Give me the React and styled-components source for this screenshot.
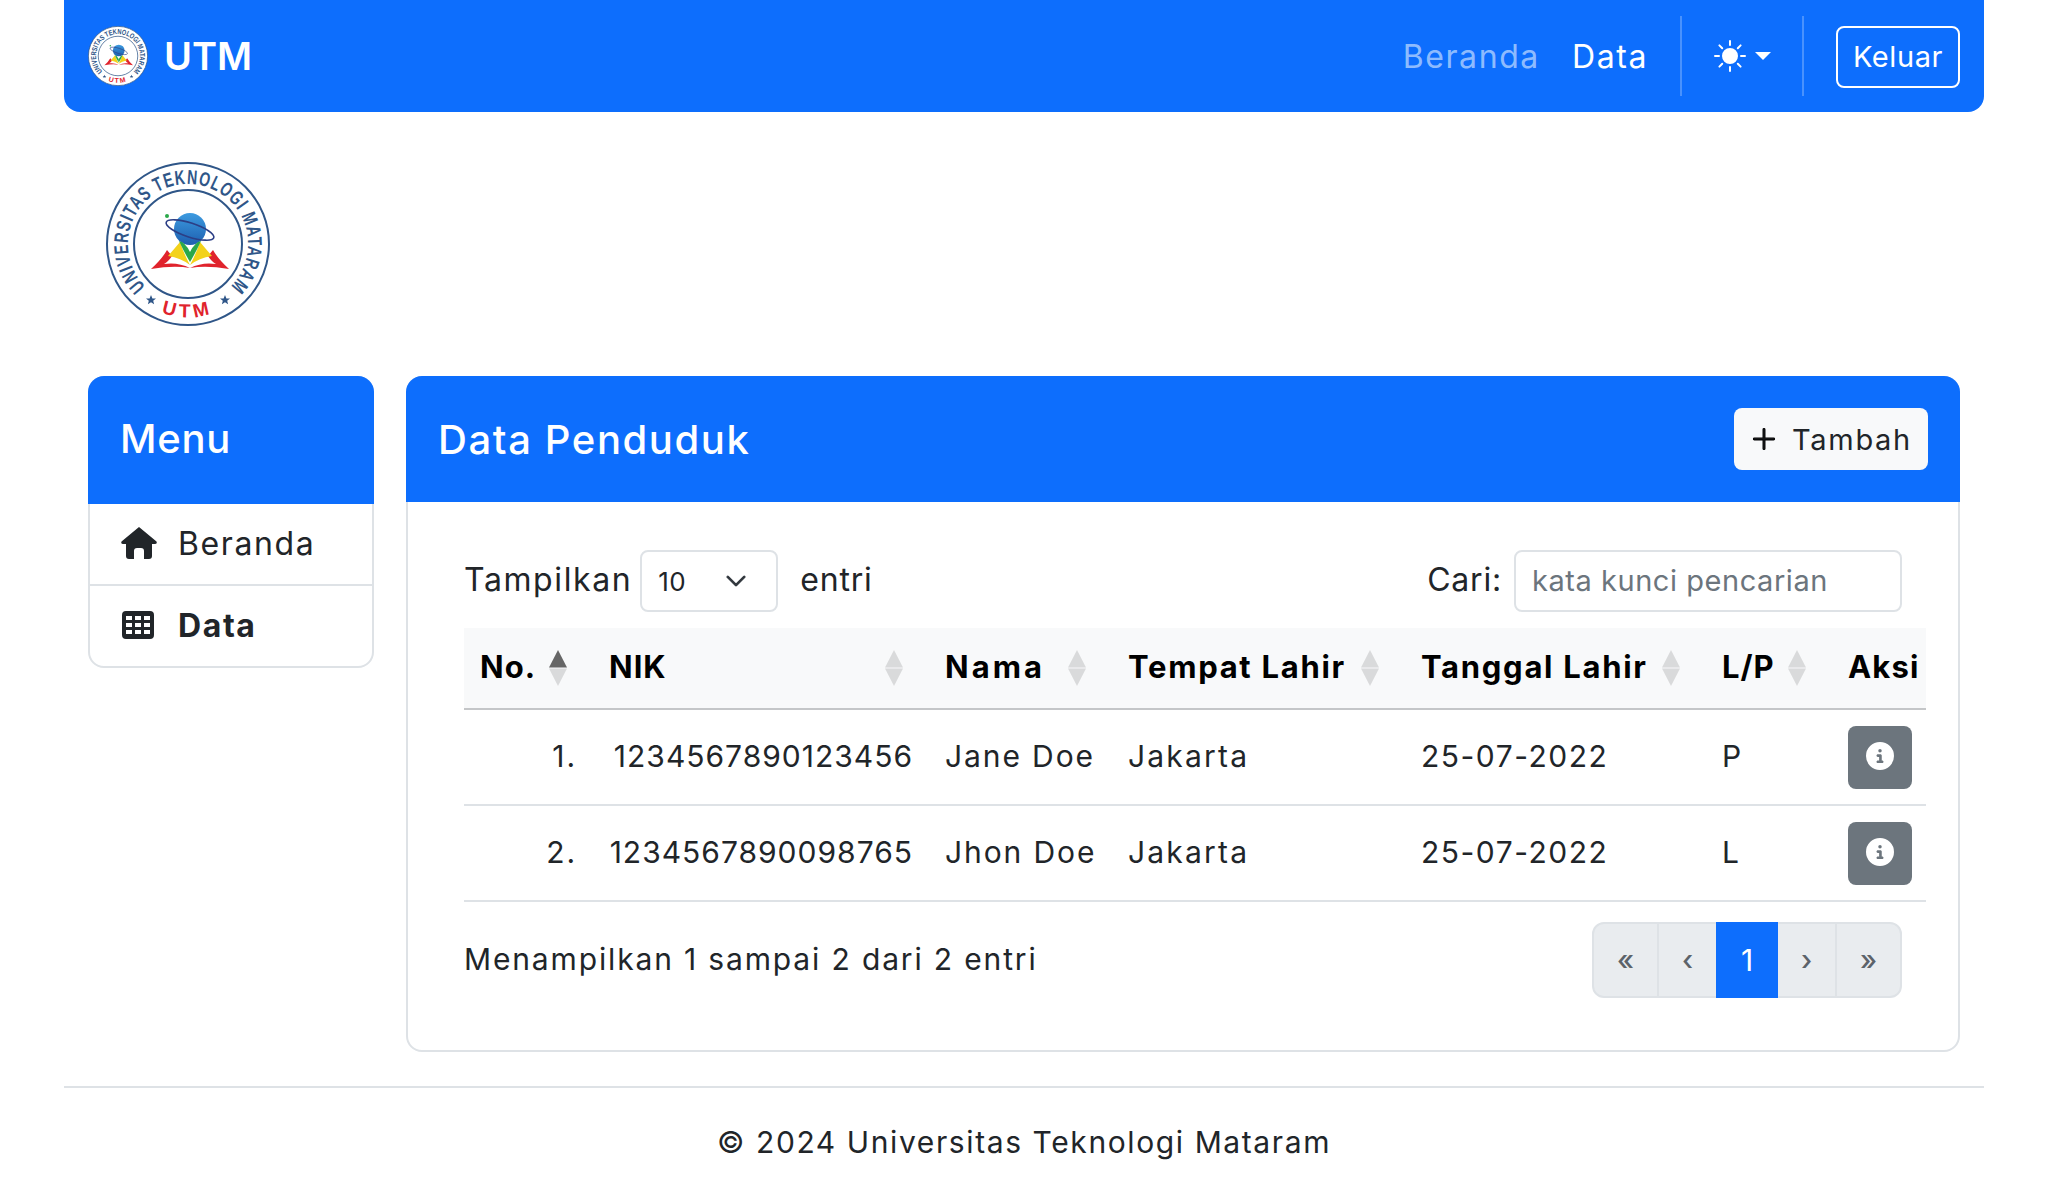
import styled, { createGlobalStyle } from "styled-components"
import { BsSunFill, BsPlusLg, BsChevronDown } from "react-icons/bs"
import { FaCircleInfo } from "react-icons/fa6"

const Global = createGlobalStyle`
    * { box-sizing : border-box; }
    body {
        margin : 0;
        background : #fff;
        color : #212529;
        font-family : "Inter", "Noto Sans", sans-serif;
        font-size : 30px;
        letter-spacing : 1.5px;
    }
`;

const Page = styled.div`
    width : 1920px;
    height : 1200px;
    margin : 0 auto;
    overflow : hidden;
`;

/* navbar */
const Navbar = styled.nav`
    height : 112px;
    background : #0d6efd;
    border-radius : 0 0 16px 16px;
    padding : 0 24px;
    display : flex;
    align-items : center;
    color : #fff;
`;

const Brand = styled.div`
    display : flex;
    align-items : center;
    gap : 16px;
    font-size : 38px;
    font-weight : 600;
    letter-spacing : 0;
    flex : 1;
`;

const NavLink = styled.a`
    font-size : 32px;
    letter-spacing : 1.6px;
    margin-right : 32px;
    color : ${p => (p.$muted ? "rgba(255,255,255,0.55)" : "#fff")};
`;

const NavDivider = styled.div`
    width : 2px;
    height : 80px;
    background : rgba(255,255,255,0.25);
`;

const ThemeToggle = styled.div`
    width : 120px;
    display : flex;
    align-items : center;
    justify-content : center;
    gap : 9px;
`;

const Caret = styled.span`
    width : 0;
    height : 0;
    border-top : 8px solid #fff;
    border-left : 8px solid transparent;
    border-right : 8px solid transparent;
`;

const LogoutButton = styled.button`
    margin : 2px 0 0 32px;
    width : 124px;
    height : 62px;
    border : 2px solid #fff;
    border-radius : 8px;
    background : transparent;
    color : #fff;
    font : inherit;
    font-size : 29px;
    letter-spacing : 0.6px;
    padding : 0 0 2px;
`;

/* logo */
const LogoRow = styled.div`
    padding : 50px 0 0 42px;
    height : 264px;
`;

/* columns */
const Columns = styled.div`
    display : grid;
    grid-template-columns : 286px 1554px;
    gap : 32px;
    padding : 0 24px;
    align-items : start;
`;

const Sidebar = styled.aside`
    border : 2px solid #dee2e6;
    border-radius : 16px;
`;

const SideHead = styled.div`
    margin : -2px -2px 0;
    height : 128px;
    background : #0d6efd;
    border-radius : 16px 16px 0 0;
    color : #fff;
    font-size : 40px;
    font-weight : 500;
    letter-spacing : 0.7px;
    padding : 0 32px 4px;
    display : flex;
    align-items : center;
`;

const SideItem = styled.div`
    height : ${p => (p.$last ? "82px" : "80px")};
    padding : 0 30px 2px;
    display : flex;
    align-items : center;
    gap : 20px;
    font-size : 32px;
    letter-spacing : 1.6px;
    font-weight : ${p => (p.$active ? 700 : 400)};
    border-top : ${p => (p.$last ? "2px solid #dee2e6" : "none")};
    svg { width : 38px; height : 32px; flex : none; fill : #212529; }
`;

const Card = styled.section`
    height : 676px;
    border : 2px solid #dee2e6;
    border-radius : 16px;
`;

const CardHead = styled.div`
    margin : -2px -2px 0;
    height : 126px;
    background : #0d6efd;
    border-radius : 16px 16px 0 0;
    color : #fff;
    padding : 0 32px;
    display : flex;
    align-items : center;
    justify-content : space-between;
`;

const CardTitle = styled.h2`
    margin : 0;
    font-size : 40px;
    font-weight : 500;
    letter-spacing : 1.6px;
`;

const AddButton = styled.button`
    width : 194px;
    height : 62px;
    border : none;
    border-radius : 8px;
    background : #f8f9fa;
    color : #212529;
    font : inherit;
    font-size : 29px;
    letter-spacing : 1.7px;
    display : flex;
    align-items : center;
    gap : 14px;
    padding : 0 0 0 16px;
    svg { width : 28px; height : 28px; stroke : #000; stroke-width : 0.7; }
`;

const CardBody = styled.div`
    padding : 48px 56px 0;
`;

const Toolbar = styled.div`
    display : flex;
    align-items : center;
    justify-content : space-between;
    height : 62px;
    font-size : 32px;
`;

const ToolGroup = styled.label`
    display : flex;
    align-items : center;
    gap : ${p => p.$gap || 8}px;
`;

const ToolText = styled.span`
    padding-bottom : 3px;
    margin-left : ${p => p.$ml || 0}px;
    letter-spacing : ${p => p.$ls || 1.6}px;
`;

const FakeSelect = styled.div`
    width : 138px;
    height : 62px;
    border : 2px solid #dee2e6;
    border-radius : 8px;
    padding : 0 29px 0 16px;
    display : flex;
    align-items : center;
    justify-content : space-between;
    font-size : 26px;
    letter-spacing : 0.5px;
    svg { width : 22px; height : 22px; stroke : #343a40; stroke-width : 1; }
`;

const SearchInput = styled.input`
    width : 388px;
    height : 62px;
    border : 2px solid #dee2e6;
    border-radius : 8px;
    padding : 0 16px 2px;
    font : inherit;
    font-size : 29px;
    letter-spacing : 0.55px;
    color : #212529;
    &::placeholder { color : #6c757d; opacity : 1; }
`;

const TableEl = styled.table`
    width : 1462px;
    margin-top : 16px;
    border-collapse : collapse;
    table-layout : fixed;
`;

const Th = styled.th`
    width : ${p => p.$w}px;
    height : 81px;
    padding : 0 16px;
    background : #f8f9fa;
    border-bottom : 2px solid #c4c6c8;
    color : #000;
    font-weight : 700;
    font-size : 31px;
    text-align : left;
    white-space : nowrap;
`;

const ThInner = styled.div`
    display : flex;
    align-items : center;
    justify-content : space-between;
    padding-right : 10px;
`;

const ThText = styled.span`
    padding-bottom : 3px;
    letter-spacing : ${p => p.$ls || 1.7}px;
`;

const Td = styled.td`
    height : 96px;
    padding : 0 16px 2px;
    border-bottom : 2px solid #dee2e6;
    text-align : ${p => (p.$right ? "right" : "left")};
    letter-spacing : ${p => p.$ls || 1.9}px;
    white-space : nowrap;
`;

const InfoButton = styled.button`
    display : flex;
    align-items : center;
    justify-content : center;
    width : 64px;
    height : 63px;
    margin-top : 2px;
    border : none;
    border-radius : 8px;
    background : #6c757d;
    color : #fff;
    padding : 0;
    svg { width : 28px; height : 28px; margin-top : -2px; }
`;

const TableFoot = styled.div`
    display : flex;
    align-items : center;
    justify-content : space-between;
    margin-top : 20px;
    letter-spacing : 1.85px;
`;

const FootText = styled.span`
    padding-bottom : 3px;
`;

const Pager = styled.div`
    width : 310px;
    height : 76px;
    border : 2px solid #dee2e6;
    border-radius : 12px;
    background : #e9ecef;
    display : flex;
`;

const PageItem = styled.div`
    width : ${p => p.$w}px;
    margin : ${p => (p.$active ? "-2px 0" : "0")};
    display : flex;
    align-items : center;
    justify-content : center;
    color : ${p => (p.$active ? "#fff" : "#5c636a")};
    background : ${p => (p.$active ? "#0d6efd" : "transparent")};
    font-size : ${p => (p.$active ? "30px" : "28px")};
    font-weight : ${p => (p.$active ? 400 : 500)};
    letter-spacing : 0;
    border-right : ${p => (p.$line ? "2px solid #dee2e6" : "none")};
`;

const Footer = styled.footer`
    margin-top : 34px;
    border-top : 2px solid #dee2e6;
    text-align : center;
    padding-top : 36px;
    letter-spacing : 1.6px;
`;

const SortIcon = ({ active }) => (
    <svg width="18" height="36" viewBox="0 0 18 36" style={{ flex: "none" }}>
        <path d="M9 0 L18 17.5 H0 Z" fill={active ? "#666" : "#d9dadb"} />
        <path d="M9 36 L18 18.5 H0 Z" fill="#d9dadb" />
    </svg>
);

const HouseIcon = () => (
    <svg viewBox="0 0 38 32">
        <path d="M19 0 L36.5 14.5 Q37.5 16.5 35 17 H32 V29 Q32 32 29 32 H24 V24 Q24 21 21 21 H17 Q14 21 14 24 V32 H9 Q6 32 6 29 V17 H3 Q0.5 16.5 1.5 14.5 Z" />
    </svg>
);

const GridIcon = () => (
    <svg viewBox="0 0 38 32">
        <path
            fillRule="evenodd"
            d="M6 2 H30 Q34 2 34 6 V26 Q34 30 30 30 H6 Q2 30 2 26 V6 Q2 2 6 2 Z
               M6 7 V11 H12 V7 Z M15 7 V11 H21 V7 Z M24 7 V11 H30 V7 Z
               M6 14 V18 H12 V14 Z M15 14 V18 H21 V14 Z M24 14 V18 H30 V14 Z
               M6 21 V25 H12 V21 Z M15 21 V25 H21 V21 Z M24 21 V25 H30 V21 Z"
        />
    </svg>
);

const BookWing = ({ transform }) => (
    <g transform={transform}>
        <path d="M45 107 Q56 97 61 88 L66 94 Q62 100 58 102 Q72 100 84 106 Q68 103 45 107Z" fill="#e0232c" />
        <path d="M62 94 Q69 86 74 80 Q78 92 84 103 Q75 96 62 94Z" fill="#f3d21b" />
        <path d="M73 79 Q79 80 84 90 L84 100 Q78 90 73 79Z" fill="#2aa84a" />
    </g>
);

const LogoStar = ({ x, y }) => (
    <polygon
        transform={`translate(${x} ${y})`}
        points="0,-5 1.4,-1.6 5,-1.5 2.2,0.7 3.1,4.2 0,2.2 -3.1,4.2 -2.2,0.7 -5,-1.5 -1.4,-1.6"
        fill="#2f5688"
    />
);

const Logo = ({ size, id }) => (
    <svg width={size} height={size} viewBox="0 0 164 164" style={{ display: "block", flex: "none" }}>
        <defs>
            <path id={id + "Top"} d="M39.6 124.4 A60 60 0 1 1 124.4 124.4" />
            <path id={id + "Bot"} d="M50 148 A73 73 0 0 0 114 148" />
            <linearGradient id={id + "Globe"} x1="0" y1="0" x2="0" y2="1">
                <stop offset="0" stopColor="#3d9be0" />
                <stop offset="1" stopColor="#1d5fb0" />
            </linearGradient>
        </defs>
        <circle cx="82" cy="82" r="81" fill="#fff" stroke="#2f5688" strokeWidth="2" />
        <circle cx="82" cy="82" r="54" fill="#fff" stroke="#2f5688" strokeWidth="2" />
        <text fontFamily="Liberation Sans" fontWeight="700" fontSize="20" fill="#2f5688">
            <textPath href={"#" + id + "Top"} textLength="283" lengthAdjust="spacingAndGlyphs">UNIVERSITAS TEKNOLOGI MATARAM</textPath>
        </text>
        <text fontFamily="Liberation Sans" fontWeight="700" fontSize="19" fill="#e0232c" letterSpacing="4">
            <textPath href={"#" + id + "Bot"} startOffset="6">UTM</textPath>
        </text>
        <LogoStar x={45} y={138} />
        <LogoStar x={119} y={138} />
        <circle cx="84" cy="67" r="16" fill={"url(#" + id + "Globe)"} />
        <ellipse cx="84" cy="68" rx="25" ry="7" fill="none" stroke="#2c3f86" strokeWidth="1.6" transform="rotate(18 84 68)" />
        <circle cx="61" cy="54" r="2" fill="#2aa84a" />
        <BookWing />
        <BookWing transform="translate(168 0) scale(-1 1)" />
    </svg>
);

const rows = [
    { no: "1.", nik: "1234567890123456", nama: "Jane Doe", tempat: "Jakarta", tgl: "25-07-2022", jk: "P" },
    { no: "2.", nik: "1234567890098765", nama: "Jhon Doe", tempat: "Jakarta", tgl: "25-07-2022", jk: "L" },
];

const columns = [
    { label: "No.", w: 129, active: true, ls: 1 },
    { label: "NIK", w: 336, ls: 1 },
    { label: "Nama", w: 183, ls: 3 },
    { label: "Tempat Lahir", w: 293 },
    { label: "Tanggal Lahir", w: 301 },
    { label: "L/P", w: 126, ls: 1 },
];

export default function App() {
    return (
        <Page>
            <Global />
            <Navbar>
                <Brand><Logo size={60} id="small" />UTM</Brand>
                <NavLink $muted>Beranda</NavLink>
                <NavLink>Data</NavLink>
                <NavDivider />
                <ThemeToggle><BsSunFill size={32} /><Caret /></ThemeToggle>
                <NavDivider />
                <LogoutButton>Keluar</LogoutButton>
            </Navbar>

            <LogoRow><Logo size={164} id="big" /></LogoRow>

            <Columns>
                <Sidebar>
                    <SideHead>Menu</SideHead>
                    <SideItem><HouseIcon />Beranda</SideItem>
                    <SideItem $last $active><GridIcon />Data</SideItem>
                </Sidebar>

                <Card>
                    <CardHead>
                        <CardTitle>Data Penduduk</CardTitle>
                        <AddButton><BsPlusLg />Tambah</AddButton>
                    </CardHead>
                    <CardBody>
                        <Toolbar>
                            <ToolGroup>
                                <ToolText>Tampilkan</ToolText>
                                <FakeSelect>10<BsChevronDown /></FakeSelect>
                                <ToolText $ml={14} $ls={0.8}>entri</ToolText>
                            </ToolGroup>
                            <ToolGroup $gap={12}>
                                <ToolText $ls={0.8}>Cari:</ToolText>
                                <SearchInput placeholder="kata kunci pencarian" />
                            </ToolGroup>
                        </Toolbar>

                        <TableEl>
                            <thead>
                                <tr>
                                    {columns.map(c => (
                                        <Th key={c.label} $w={c.w}>
                                            <ThInner><ThText $ls={c.ls}>{c.label}</ThText><SortIcon active={c.active} /></ThInner>
                                        </Th>
                                    ))}
                                    <Th $w={94}><ThInner><ThText $ls={1.2}>Aksi</ThText></ThInner></Th>
                                </tr>
                            </thead>
                            <tbody>
                                {rows.map(r => (
                                    <tr key={r.no}>
                                        <Td $right>{r.no}</Td>
                                        <Td $right $ls={1}>{r.nik}</Td>
                                        <Td>{r.nama}</Td>
                                        <Td $ls={2.2}>{r.tempat}</Td>
                                        <Td $ls={1.5}>{r.tgl}</Td>
                                        <Td>{r.jk}</Td>
                                        <Td><InfoButton><FaCircleInfo /></InfoButton></Td>
                                    </tr>
                                ))}
                            </tbody>
                        </TableEl>

                        <TableFoot>
                            <FootText>Menampilkan 1 sampai 2 dari 2 entri</FootText>
                            <Pager>
                                <PageItem $w={65} $line>«</PageItem>
                                <PageItem $w={57}>‹</PageItem>
                                <PageItem $w={62} $active>1</PageItem>
                                <PageItem $w={59} $line>›</PageItem>
                                <PageItem $w={63}>»</PageItem>
                            </Pager>
                        </TableFoot>
                    </CardBody>
                </Card>
            </Columns>

            <Footer>© 2024 Universitas Teknologi Mataram</Footer>
        </Page>
    )
}
